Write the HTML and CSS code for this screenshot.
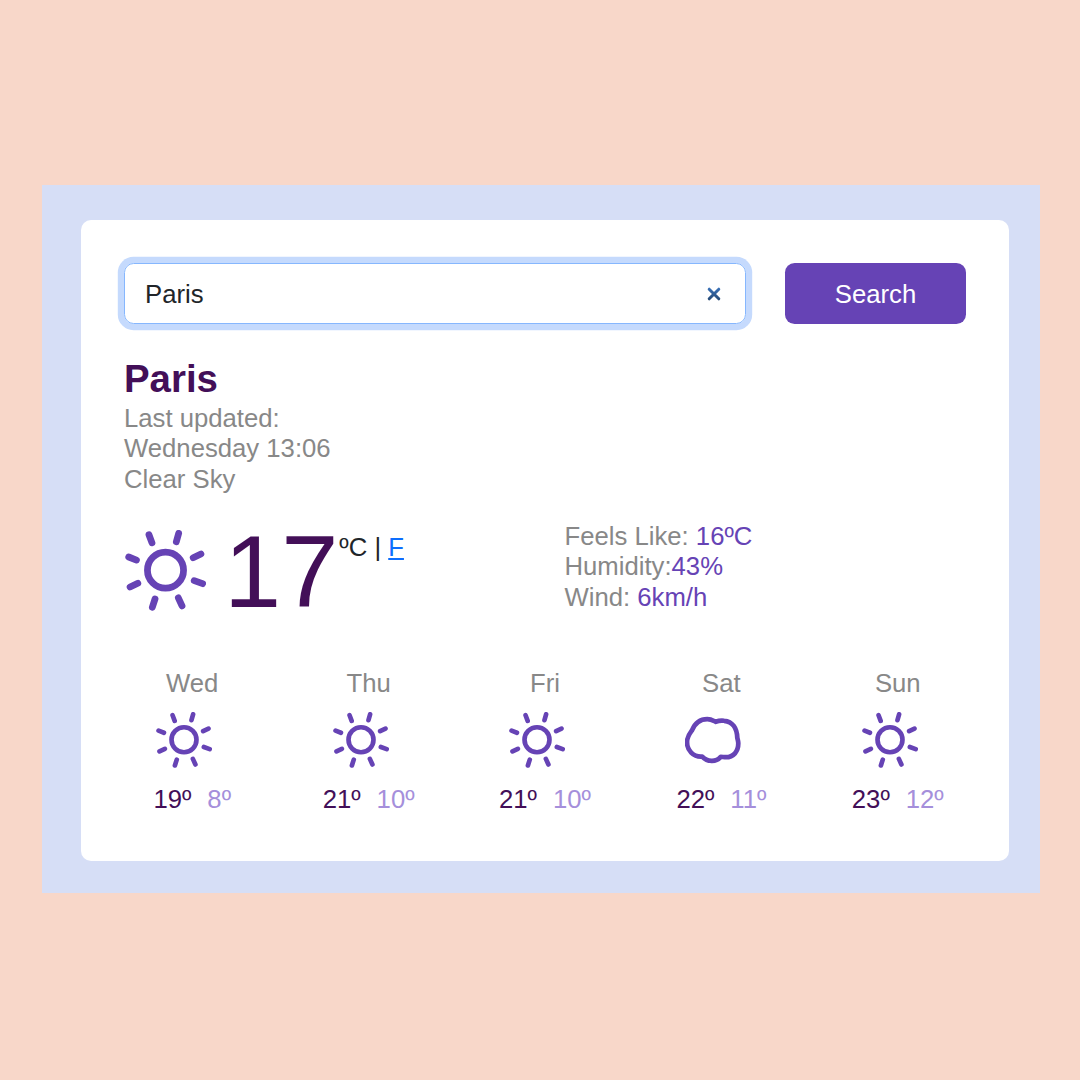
FILE: index.html
```html
<!DOCTYPE html>
<html lang="en">
<head>
<meta charset="utf-8">
<title>Weather</title>
<link rel="stylesheet" href="styles.css">
</head>
<body>
<svg class="sprite" aria-hidden="true">
  <symbol id="sun" viewBox="48 46 240 240">
    <g fill="none" stroke="currentColor" stroke-width="20" stroke-linecap="round">
      <circle cx="168" cy="165" r="53.5"/>
      <path d="M119 60L128 84M207 56L200 81M273 117L250 128M253 196L278 205M206 247L217 271M137 250L129 275M86 204L63 215M59 126L82 135"/>
    </g>
  </symbol>
  <symbol id="cloud" viewBox="61 157 166 166">
    <path fill="none" stroke="currentColor" stroke-width="14" stroke-linejoin="round" d="M67 246C67 230 73 223 82 211C90 191 106 178 127 178C138 178 144 182 152 186C160 183 168 182 177 183C202 185 215 205 216 233C217 239 219 242 219 250C219 274 205 291 182 291C176 291 172 290 167 290C152 307 127 305 112 289C85 291 67 270 67 246Z"/>
  </symbol>
</svg>
<main class="panel">
  <section class="card">
    <form class="search">
      <label class="field">
        <input class="field-input" type="text" value="Paris" aria-label="City">
        <svg class="clear" viewBox="0 0 14 14">
          <defs><linearGradient id="clear-fill" x1="0" y1="0" x2="0" y2="14" gradientUnits="userSpaceOnUse"><stop offset="0" stop-color="#3b74bd"/><stop offset="1" stop-color="#244670"/></linearGradient></defs>
          <path d="M2.2 2.2L11.8 11.8M11.8 2.2L2.2 11.8" stroke="url(#clear-fill)" stroke-width="3" stroke-linecap="round"/>
        </svg>
      </label>
      <button class="button" type="button">Search</button>
    </form>
    <header class="overview">
      <h1 class="city">Paris</h1>
      <div>Last updated:</div>
      <div>Wednesday 13:06</div>
      <div>Clear Sky</div>
    </header>
    <div class="current">
      <div class="now">
        <svg class="now-icon"><use href="#sun"/></svg>
        <span class="degrees">17</span>
        <span class="units">ºC | <a class="unit-link" href="#">F</a></span>
      </div>
      <div class="details">
        <div>Feels Like: <span class="value">16ºC</span></div>
        <div>Humidity:<span class="value">43%</span></div>
        <div>Wind: <span class="value">6km/h</span></div>
      </div>
    </div>
    <div class="forecast">
      <div class="day"><div>Wed</div><svg class="day-icon"><use href="#sun"/></svg><div class="temps"><span class="max">19º</span><span class="min">8º</span></div></div>
      <div class="day"><div>Thu</div><svg class="day-icon"><use href="#sun"/></svg><div class="temps"><span class="max">21º</span><span class="min">10º</span></div></div>
      <div class="day"><div>Fri</div><svg class="day-icon"><use href="#sun"/></svg><div class="temps"><span class="max">21º</span><span class="min">10º</span></div></div>
      <div class="day"><div>Sat</div><svg class="day-icon"><use href="#cloud"/></svg><div class="temps"><span class="max">22º</span><span class="min">11º</span></div></div>
      <div class="day"><div>Sun</div><svg class="day-icon"><use href="#sun"/></svg><div class="temps"><span class="max">23º</span><span class="min">12º</span></div></div>
    </div>
  </section>
</main>
</body>
</html>
```
FILE: styles.css
```css
* { box-sizing: border-box; }
body {
  margin: 0;
  min-height: 1080px;
  padding: 185px 40px 0 42px;
  background: #f8d7c9;
  font: 25.7px/30.7px "Liberation Sans", Arial, sans-serif;
  color: #212529;
}
.sprite { display: none; }
.panel {
  height: 708px;
  padding: 35px 31px 32px 39px;
  background: #d6def6;
}
.card {
  height: 641px;
  padding: 43px 43px 0;
  border-radius: 10px;
  background: #fff;
}
.search { display: flex; gap: 39px; height: 61px; }
.field {
  display: flex;
  align-items: center;
  width: 622px;
  padding: 0 24px 0 20px;
  border: 1.5px solid #86b7fe;
  border-radius: 9.6px;
  box-shadow: 0 0 0 6.2px #c5dafd;
}
.field-input {
  flex: 1;
  min-width: 0;
  padding: 1px 0 0;
  border: 0;
  outline: 0;
  background: none;
  font: inherit;
  color: inherit;
}
.clear { width: 14px; height: 14px; margin-top: 1px; }
.button {
  width: 181px;
  padding: 2px 0 0;
  border: 0;
  border-radius: 9.6px;
  background: #6643b5;
  color: #fff;
  font: inherit;
}
.overview { padding-top: 32px; color: #888; }
.city {
  margin: 0;
  font-size: 38.4px;
  line-height: 46.6px;
  color: #430f58;
}
.current { display: flex; padding-top: 26px; }
.now { display: flex; width: 440.5px; height: 98px; }
.now-icon { width: 81px; height: 81px; margin: 9px 18px 0 1px; color: #6643b5; }
.degrees { font-size: 102.8px; line-height: 101px; color: #430f58; }
.units { margin: 11px 0 0 1px; }
.unit-link { color: #0d6efd; }
.details { color: #888; }
.value { color: #6643b5; }
.forecast {
  display: grid;
  grid-template-columns: repeat(5, 1fr);
  margin: 49px -20px 0;
  color: #888;
}
.day { display: flex; flex-direction: column; align-items: center; }
.day-icon { width: 56px; height: 56px; margin: 14px 16px 16px 0; color: #6643b5; }
.temps { display: flex; gap: 16px; }
.max { color: #430f58; }
.min { color: #a58fdb; }
```
